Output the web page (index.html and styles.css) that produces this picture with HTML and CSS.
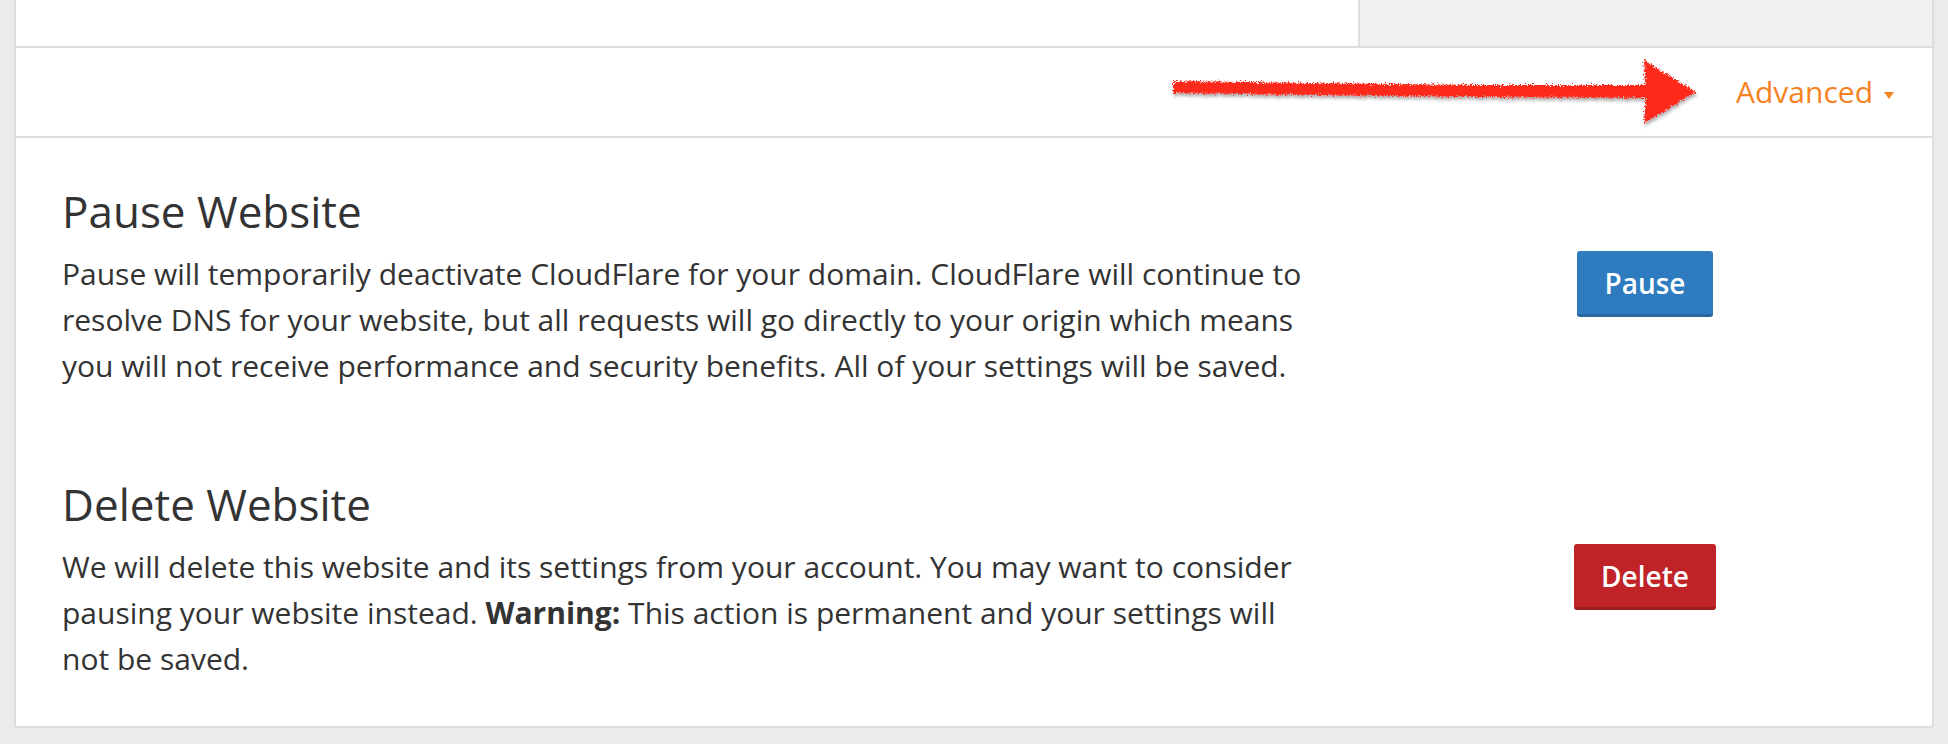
FILE: index.html
```html
<!DOCTYPE html>
<html lang="en">

<head>
    <meta charset="UTF-8">
    <meta name="viewport" content="width=device-width, initial-scale=1.0">
    <title>Website Settings</title>
    <link rel="stylesheet" href="styles.css">
</head>

<body>
    <div class="panel">
        <div class="top-row">
            <div class="top-main"></div>
            <div class="top-side"></div>
        </div>
        <div class="toolbar">
            <svg class="annotation" width="560" height="80" viewBox="0 0 560 80">
                <defs>
                    <filter id="rough" x="-5%" y="-20%" width="110%" height="150%">
                        <feTurbulence type="fractalNoise" baseFrequency="1.4" numOctaves="2" seed="3" result="noise" />
                        <feDisplacementMap in="SourceGraphic" in2="noise" scale="7" xChannelSelector="R" yChannelSelector="G" result="rough" />
                        <feDropShadow dx="1" dy="3" stdDeviation="1.5" flood-color="#000" flood-opacity="0.3" />
                    </filter>
                </defs>
                <g filter="url(#rough)" fill="#fd2c1f">
                    <path d="M13,31 L150,33 L320,35 L488,35 L488,48 L320,47 L150,45 L13,43 Z" />
                    <path d="M484,9 L490,14 L536,42 L490,70 L484,73 L486,40 Z" />
                </g>
            </svg>
            <a class="advanced" href="#">Advanced <span class="caret"></span></a>
        </div>
        <div class="settings">
            <div class="setting">
                <h2>Pause Website</h2>
                <p>Pause will temporarily deactivate CloudFlare for your domain. CloudFlare will continue to resolve DNS for your website, but all requests will go directly to your origin which means you will not receive performance and security benefits. All of your settings will be saved.</p>
                <div class="setting-action">
                    <button class="btn btn-primary">Pause</button>
                </div>
            </div>
            <div class="setting">
                <h2>Delete Website</h2>
                <p>We will delete this website and its settings from your account. You may want to consider pausing your website instead. <strong>Warning:</strong> This action is permanent and your settings will not be saved.</p>
                <div class="setting-action">
                    <button class="btn btn-danger">Delete</button>
                </div>
            </div>
        </div>
    </div>
</body>

</html>
```

FILE: styles.css
```css
body {
    font-family: "Open Sans", sans-serif;
    background-color: #ebebeb;
    color: #333;
    margin: 0;
}

.panel {
    margin: 0 14px;
    background: #fff;
    border: 2px solid #ddd;
    border-top: none;
    border-radius: 0 0 4px 4px;
}

.top-row {
    display: flex;
    height: 46px;
    border-bottom: 2px solid #ddd;
}

.top-main {
    width: 1342px;
    border-right: 2px solid #ddd;
}

.top-side {
    flex: 1;
    background: #f1f1f1;
}

.toolbar {
    position: relative;
    height: 88px;
    display: flex;
    justify-content: flex-end;
    align-items: center;
    padding-right: 38px;
    border-bottom: 2px solid #ddd;
}

.annotation {
    position: absolute;
    left: 1144px;
    top: 2px;
}

.advanced {
    display: flex;
    align-items: center;
    font-size: 30px;
    line-height: 40px;
    color: #f6821f;
    text-decoration: none;
}

.caret {
    margin-left: 11px;
    margin-top: 6px;
    border-left: 5.5px solid transparent;
    border-right: 5.5px solid transparent;
    border-top: 7px solid #f6821f;
}

.settings {
    padding: 48px 46px 44px;
}

.setting {
    display: grid;
    grid-template-columns: 1245px 1fr;
    column-gap: 97px;
}

.setting + .setting {
    margin-top: 90px;
}

.setting h2 {
    grid-column: 1;
    margin: 0 0 15px;
    font-size: 44px;
    line-height: 50px;
    font-weight: 400;
}

.setting p {
    grid-column: 1;
    margin: 0;
    font-size: 30px;
    line-height: 46px;
}

.setting p strong {
    font-weight: 700;
}

.setting-action {
    grid-column: 2;
    grid-row: 2;
    display: flex;
    justify-content: center;
    align-items: flex-start;
}

.btn {
    height: 66px;
    padding: 0 27px;
    border: none;
    border-radius: 3px;
    font-family: "Open Sans", sans-serif;
    font-size: 28px;
    font-weight: 600;
    color: #fff;
    cursor: pointer;
}

.btn-primary {
    background: #2f7bbf;
    border-bottom: 3px solid #28679f;
}

.btn-danger {
    background: #bf2328;
    border-bottom: 3px solid #9d1c20;
}
```
